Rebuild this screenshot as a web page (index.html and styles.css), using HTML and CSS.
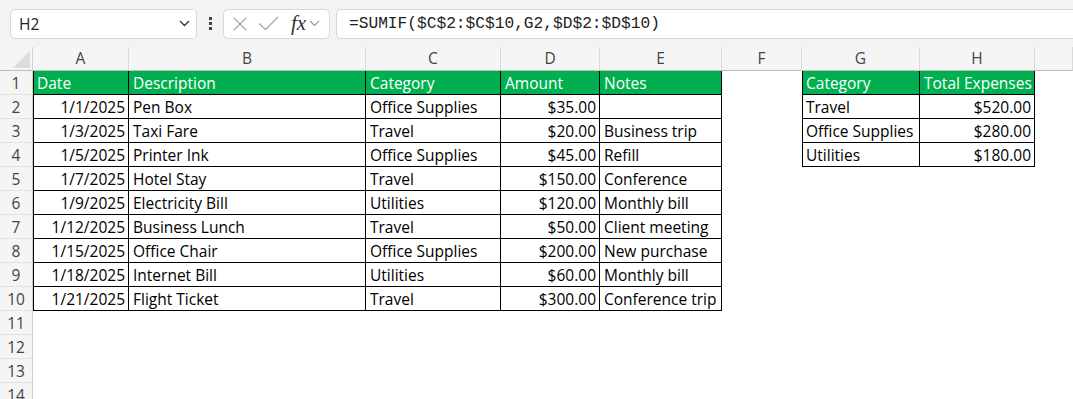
FILE: index.html
```html
<!DOCTYPE html>
<html lang="en">
<head>
    <meta charset="UTF-8">
    <meta name="viewport" content="width=device-width, initial-scale=1.0">
    <title>Expenses - SUMIF</title>
    <link rel="stylesheet" href="styles.css">
</head>
<body>
    <div class="formula-bar">
        <div class="name-box">
            <span>H2</span>
            <svg class="chev" width="11" height="7" viewBox="0 0 11 7"><polyline points="1,1 5.5,5.5 10,1" fill="none" stroke="#333" stroke-width="1.3"/></svg>
        </div>
        <div class="dots"><i></i><i></i><i></i></div>
        <div class="fx-box">
            <svg width="14" height="14" viewBox="0 0 14 14"><path d="M1 1L13 13M13 1L1 13" stroke="#a8a8a8" stroke-width="1.3" fill="none"/></svg>
            <svg width="21" height="15" viewBox="0 0 21 15"><polyline points="1,7.5 7.5,13.5 20,1" fill="none" stroke="#a8a8a8" stroke-width="1.3"/></svg>
            <span class="fx">fx</span>
            <svg width="11" height="7" viewBox="0 0 11 7"><polyline points="1,1 5.5,5.5 10,1" fill="none" stroke="#999" stroke-width="1.2"/></svg>
        </div>
        <div class="formula">=SUMIF($C$2:$C$10,G2,$D$2:$D$10)</div>
    </div>

    <div class="sheet">
        <!-- column headers -->
        <div class="corner"><svg width="17" height="17" viewBox="0 0 17 17"><polygon points="17,0 17,17 0,17" fill="#dcdcdc"/></svg></div>
        <div class="ch">A</div><div class="ch">B</div><div class="ch">C</div><div class="ch">D</div>
        <div class="ch">E</div><div class="ch">F</div><div class="ch">G</div><div class="ch">H</div><div class="ch"></div>

        <div class="rh">1</div>
        <div class="c hd first">Date</div><div class="c hd">Description</div><div class="c hd">Category</div><div class="c hd">Amount</div><div class="c hd">Notes</div>
        <div class="c"></div><div class="c hd first">Category</div><div class="c hd">Total Expenses</div><div class="c"></div>

        <div class="rh">2</div>
        <div class="c b first r">1/1/2025</div><div class="c b">Pen Box</div><div class="c b">Office Supplies</div><div class="c b r">$35.00</div><div class="c b"></div>
        <div class="c"></div><div class="c b first">Travel</div><div class="c b r">$520.00</div><div class="c"></div>

        <div class="rh">3</div>
        <div class="c b first r">1/3/2025</div><div class="c b">Taxi Fare</div><div class="c b">Travel</div><div class="c b r">$20.00</div><div class="c b">Business trip</div>
        <div class="c"></div><div class="c b first">Office Supplies</div><div class="c b r">$280.00</div><div class="c"></div>

        <div class="rh">4</div>
        <div class="c b first r">1/5/2025</div><div class="c b">Printer Ink</div><div class="c b">Office Supplies</div><div class="c b r">$45.00</div><div class="c b">Refill</div>
        <div class="c"></div><div class="c b first">Utilities</div><div class="c b r">$180.00</div><div class="c"></div>

        <div class="rh">5</div>
        <div class="c b first r">1/7/2025</div><div class="c b">Hotel Stay</div><div class="c b">Travel</div><div class="c b r">$150.00</div><div class="c b">Conference</div>
        <div class="c"></div><div class="c"></div><div class="c"></div><div class="c"></div>

        <div class="rh">6</div>
        <div class="c b first r">1/9/2025</div><div class="c b">Electricity Bill</div><div class="c b">Utilities</div><div class="c b r">$120.00</div><div class="c b">Monthly bill</div>
        <div class="c"></div><div class="c"></div><div class="c"></div><div class="c"></div>

        <div class="rh">7</div>
        <div class="c b first r">1/12/2025</div><div class="c b">Business Lunch</div><div class="c b">Travel</div><div class="c b r">$50.00</div><div class="c b">Client meeting</div>
        <div class="c"></div><div class="c"></div><div class="c"></div><div class="c"></div>

        <div class="rh">8</div>
        <div class="c b first r">1/15/2025</div><div class="c b">Office Chair</div><div class="c b">Office Supplies</div><div class="c b r">$200.00</div><div class="c b">New purchase</div>
        <div class="c"></div><div class="c"></div><div class="c"></div><div class="c"></div>

        <div class="rh">9</div>
        <div class="c b first r">1/18/2025</div><div class="c b">Internet Bill</div><div class="c b">Utilities</div><div class="c b r">$60.00</div><div class="c b">Monthly bill</div>
        <div class="c"></div><div class="c"></div><div class="c"></div><div class="c"></div>

        <div class="rh">10</div>
        <div class="c b first r">1/21/2025</div><div class="c b">Flight Ticket</div><div class="c b">Travel</div><div class="c b r">$300.00</div><div class="c b">Conference trip</div>
        <div class="c"></div><div class="c"></div><div class="c"></div><div class="c"></div>

        <div class="rh">11</div>
        <div class="c"></div><div class="c"></div><div class="c"></div><div class="c"></div><div class="c"></div><div class="c"></div><div class="c"></div><div class="c"></div><div class="c"></div>
        <div class="rh">12</div>
        <div class="c"></div><div class="c"></div><div class="c"></div><div class="c"></div><div class="c"></div><div class="c"></div><div class="c"></div><div class="c"></div><div class="c"></div>
        <div class="rh">13</div>
        <div class="c"></div><div class="c"></div><div class="c"></div><div class="c"></div><div class="c"></div><div class="c"></div><div class="c"></div><div class="c"></div><div class="c"></div>
        <div class="rh">14</div>
        <div class="c"></div><div class="c"></div><div class="c"></div><div class="c"></div><div class="c"></div><div class="c"></div><div class="c"></div><div class="c"></div><div class="c"></div>
    </div>
</body>
</html>
```

FILE: styles.css
```css
* {
    box-sizing: border-box;
}

body {
    margin: 0;
    padding: 0;
    background-color: #f3f3f3;
    font-family: "Open Sans", Arial, sans-serif;
    color: #000;
    overflow: hidden;
}

.formula-bar {
    display: flex;
    align-items: center;
    height: 47px;
    padding: 0 0 0 10px;
}

.name-box {
    display: flex;
    align-items: center;
    justify-content: space-between;
    width: 187px;
    height: 30px;
    background-color: #ffffff;
    border: 1px solid #d6d6d6;
    border-radius: 5px;
    padding: 0 6px 0 8px;
    font-size: 15.5px;
    color: #222;
}

.dots {
    display: flex;
    flex-direction: column;
    gap: 2px;
    margin: 0 11px 0 12px;
}

.dots i {
    display: block;
    width: 3px;
    height: 3px;
    background-color: #444;
}

.fx-box {
    display: flex;
    align-items: center;
    width: 107px;
    height: 30px;
    background-color: #ffffff;
    border: 1px solid #d6d6d6;
    border-radius: 5px;
    padding: 0 4px 0 9px;
    gap: 11px;
}

.fx {
    font-family: "Liberation Serif", "Times New Roman", serif;
    font-style: italic;
    font-size: 21px;
    color: #333;
    margin-left: 1px;
    margin-right: -8px;
    line-height: 1;
}

.formula {
    flex-grow: 1;
    height: 30px;
    margin-left: 6px;
    background-color: #ffffff;
    border: 1px solid #d6d6d6;
    border-right: none;
    border-radius: 5px 0 0 5px;
    padding-left: 12px;
    font-family: "Liberation Mono", "DejaVu Sans Mono", monospace;
    font-size: 16.2px;
    line-height: 28px;
    color: #222;
}

.sheet {
    display: grid;
    grid-template-columns: 33px 96px 237px 135px 99px 122px 80px 118px 115px 1fr;
    grid-auto-rows: 24px;
    background-color: #ffffff;
}

.corner {
    background-color: #f5f5f5;
    border-right: 1px solid #d4d4d4;
    border-bottom: 1px solid #bdbdbd;
    display: flex;
    align-items: flex-end;
    justify-content: flex-end;
    padding: 0 2px 2px 0;
}

.ch {
    background-color: #f5f5f5;
    border-right: 1px solid #dadada;
    border-bottom: 1px solid #bdbdbd;
    text-align: center;
    font-size: 15.5px;
    line-height: 23px;
    color: #444;
}

.rh {
    background-color: #f5f5f5;
    border-right: 1px solid #cfcfcf;
    border-bottom: 1px solid #e2e2e2;
    text-align: center;
    font-size: 15.5px;
    line-height: 24px;
    color: #444;
}

.c {
    font-size: 15.5px;
    line-height: 24px;
    padding: 0 3px 0 4px;
    white-space: nowrap;
    overflow: hidden;
}

.hd {
    background-color: #00b050;
    color: #ffffff;
    border-right: 1px solid #000;
    border-bottom: 1px solid #000;
}

.b {
    border-right: 1px solid #000;
    border-bottom: 1px solid #000;
}

.first {
    border-left: 1px solid #000;
    padding-left: 3px;
}

.r {
    text-align: right;
}
```
